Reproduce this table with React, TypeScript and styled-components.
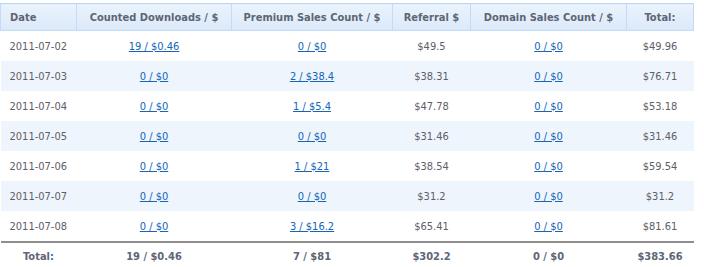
import * as React from 'react';
import styled, { createGlobalStyle } from 'styled-components';

const GlobalStyle = createGlobalStyle`
  html, body {
    margin: 0;
    padding: 0;
    background: #ffffff;
  }
  body {
    font-family: "DejaVu Sans Condensed", "DejaVu Sans", "Liberation Sans", sans-serif;
    font-size: 11px;
  }
`;

interface DayRow {
  date: string;
  downloads: string;
  premium: string;
  referral: string;
  domain: string;
  total: string;
}

const rows: DayRow[] = [
  { date: '2011-07-02', downloads: '19 / $0.46', premium: '0 / $0', referral: '$49.5', domain: '0 / $0', total: '$49.96' },
  { date: '2011-07-03', downloads: '0 / $0', premium: '2 / $38.4', referral: '$38.31', domain: '0 / $0', total: '$76.71' },
  { date: '2011-07-04', downloads: '0 / $0', premium: '1 / $5.4', referral: '$47.78', domain: '0 / $0', total: '$53.18' },
  { date: '2011-07-05', downloads: '0 / $0', premium: '0 / $0', referral: '$31.46', domain: '0 / $0', total: '$31.46' },
  { date: '2011-07-06', downloads: '0 / $0', premium: '1 / $21', referral: '$38.54', domain: '0 / $0', total: '$59.54' },
  { date: '2011-07-07', downloads: '0 / $0', premium: '0 / $0', referral: '$31.2', domain: '0 / $0', total: '$31.2' },
  { date: '2011-07-08', downloads: '0 / $0', premium: '3 / $16.2', referral: '$65.41', domain: '0 / $0', total: '$81.61' },
];

const Wrap = styled.div`
  padding-top: 3px;
`;

const StatsTable = styled.table`
  width: 693px;
  border-collapse: collapse;
  table-layout: fixed;
`;

const HeadCell = styled.th<{ $left?: boolean }>`
  height: 26px;
  padding: 0 0 0 ${(p) => (p.$left ? '9px' : '0')};
  text-align: ${(p) => (p.$left ? 'left' : 'center')};
  font-weight: bold;
  color: #5d6675;
  background: linear-gradient(#eaf3fd, #dce9fa);
  border: 1px solid #c3dbf6;
  border-top-color: #bcd7f5;
  white-space: nowrap;
`;

const Row = styled.tr<{ $alt: boolean }>`
  background: ${(p) => (p.$alt ? '#eef5fd' : '#ffffff')};
`;

const Cell = styled.td<{ $left?: boolean }>`
  height: 30px;
  padding: 0 0 0 ${(p) => (p.$left ? '9px' : '0')};
  text-align: ${(p) => (p.$left ? 'left' : 'center')};
  color: #5e5e66;
  white-space: nowrap;
`;

const Link = styled.a`
  color: #1565b8;
  text-decoration: underline;
`;

const TotalCell = styled.td`
  height: 26px;
  padding: 0;
  text-align: center;
  font-weight: bold;
  color: #5d6675;
  border-top: 2px solid #8e8e8e;
  white-space: nowrap;
`;

export default function App() {
  return (
    <Wrap>
      <GlobalStyle />
      <StatsTable>
        <colgroup>
          <col style={{ width: 76 }} />
          <col style={{ width: 155 }} />
          <col style={{ width: 161 }} />
          <col style={{ width: 78 }} />
          <col style={{ width: 156 }} />
          <col style={{ width: 67 }} />
        </colgroup>
        <thead>
          <tr>
            <HeadCell $left>Date</HeadCell>
            <HeadCell>Counted Downloads / $</HeadCell>
            <HeadCell>Premium Sales Count / $</HeadCell>
            <HeadCell>Referral $</HeadCell>
            <HeadCell>Domain Sales Count / $</HeadCell>
            <HeadCell>Total:</HeadCell>
          </tr>
        </thead>
        <tbody>
          {rows.map((r, i) => (
            <Row key={r.date} $alt={i % 2 === 1}>
              <Cell $left>{r.date}</Cell>
              <Cell><Link href="#">{r.downloads}</Link></Cell>
              <Cell><Link href="#">{r.premium}</Link></Cell>
              <Cell>{r.referral}</Cell>
              <Cell><Link href="#">{r.domain}</Link></Cell>
              <Cell>{r.total}</Cell>
            </Row>
          ))}
          <tr>
            <TotalCell>Total:</TotalCell>
            <TotalCell>19 / $0.46</TotalCell>
            <TotalCell>7 / $81</TotalCell>
            <TotalCell>$302.2</TotalCell>
            <TotalCell>0 / $0</TotalCell>
            <TotalCell>$383.66</TotalCell>
          </tr>
        </tbody>
      </StatsTable>
    </Wrap>
  );
}
